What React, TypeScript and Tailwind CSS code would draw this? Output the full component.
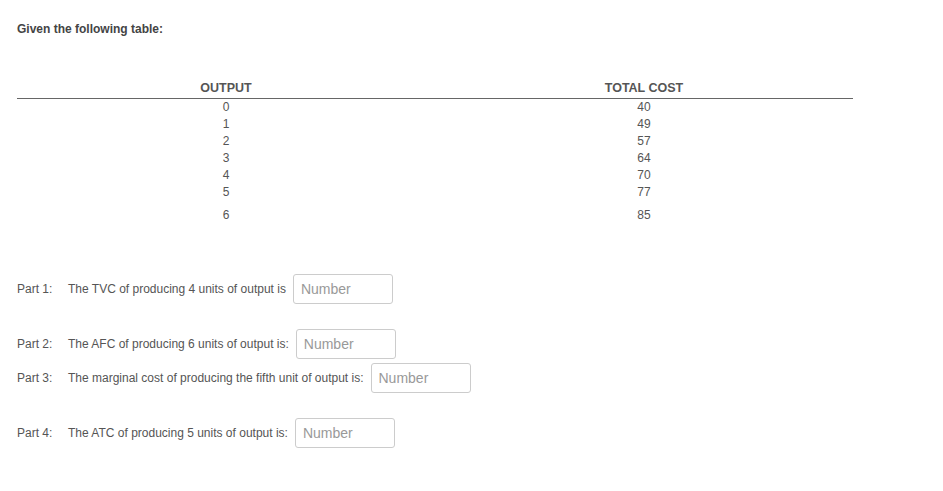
export default function App() {
  const rows = [["0","40"],["1","49"],["2","57"],["3","64"],["4","70"],["5","77"]];
  const Part = ({ n, text }: { n: string; text: string }) => (
    <div className="flex items-center h-[30px]">
      <span className="w-[51px]">Part {n}:</span>
      <span className="mr-[7px]">{text}</span>
      <input className="w-[100px] h-[30px] border border-[#ccc] rounded-[3px] px-[7px] text-[14px] text-[#555] placeholder:text-[#999] outline-none" placeholder="Number" />
    </div>
  );
  return (
    <div className="bg-white w-[943px] h-[491px] text-[#555] text-[12px]" style={{ fontFamily: '"Liberation Sans", Arial, sans-serif' }}>
      <div className="pl-[17px] pt-[20px] font-bold text-[#444]">Given the following table:</div>
      <div className="ml-[17px] w-[836px] mt-[43px]">
        <div className="grid grid-cols-2 text-center border-b border-[#666] pb-[2px] text-[12.5px] font-semibold leading-[15px] text-[#555]">
          <div>OUTPUT</div><div>TOTAL COST</div>
        </div>
        {rows.map(([a, b]) => (
          <div key={a} className="grid grid-cols-2 text-center h-[17px] leading-[17px]">
            <div>{a}</div><div>{b}</div>
          </div>
        ))}
        <div className="grid grid-cols-2 text-center h-[22px] leading-[28px]">
          <div>6</div><div>85</div>
        </div>
      </div>
      <div className="pl-[17px] mt-[51px] flex flex-col">
        <Part n="1" text="The TVC of producing 4 units of output is" />
        <div className="h-[25px]" />
        <Part n="2" text="The AFC of producing 6 units of output is:" />
        <div className="h-[4px]" />
        <Part n="3" text="The marginal cost of producing the fifth unit of output is:" />
        <div className="h-[25px]" />
        <Part n="4" text="The ATC of producing 5 units of output is:" />
      </div>
    </div>
  );
}
